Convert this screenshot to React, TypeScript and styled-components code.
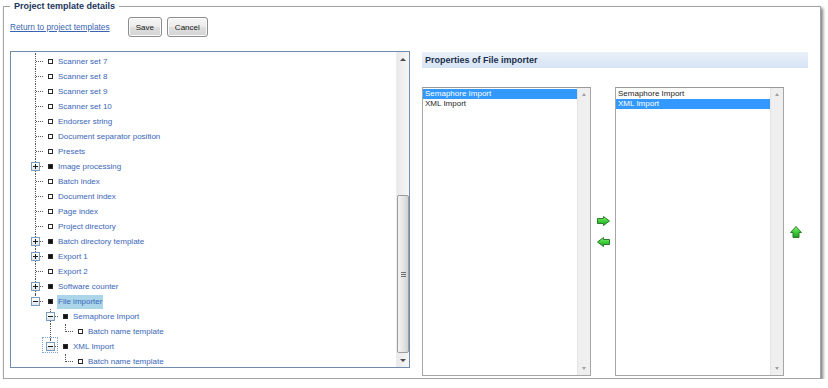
import React from "react";
import styled, { createGlobalStyle, css } from "styled-components";

const GlobalStyle = createGlobalStyle`
  html, body { margin: 0; padding: 0; background: #fff; }
  body {
    font-family: "Liberation Sans", Arial, sans-serif;
    font-size: 8px;
    color: #222;
  }
`;

interface TreeNode {
  label: string;
  children?: TreeNode[];
  collapsed?: boolean;
  selected?: boolean;
  focused?: boolean;
  offscreen?: boolean;
}

const tree: TreeNode[] = [
  // scrolled past, only its lines peek in at the top
  { label: "Scanner set 6", offscreen: true },
  { label: "Scanner set 7" },
  { label: "Scanner set 8" },
  { label: "Scanner set 9" },
  { label: "Scanner set 10" },
  { label: "Endorser string" },
  { label: "Document separator position" },
  { label: "Presets" },
  { label: "Image processing", collapsed: true },
  { label: "Batch index" },
  { label: "Document index" },
  { label: "Page index" },
  { label: "Project directory" },
  { label: "Batch directory template", collapsed: true },
  { label: "Export 1", collapsed: true },
  { label: "Export 2" },
  { label: "Software counter", collapsed: true },
  {
    label: "File importer",
    selected: true,
    children: [
      { label: "Semaphore Import", children: [{ label: "Batch name template" }] },
      { label: "XML Import", focused: true, children: [{ label: "Batch name template" }] },
    ],
  },
];

interface FlatRow {
  node: TreeNode;
  guides: boolean[];
  isLast: boolean;
}

function flatten(nodes: TreeNode[], guides: boolean[], out: FlatRow[]): FlatRow[] {
  nodes.forEach((node, i) => {
    const isLast = i === nodes.length - 1;
    out.push({ node, guides, isLast });
    if (node.children) flatten(node.children, [...guides, !isLast], out);
  });
  return out;
}

const rows = flatten(tree, [], []);

export default function App() {
  return (
    <Page>
      <GlobalStyle />
      <Frame>
        <Legend>Project template details</Legend>
        <Toolbar>
          <BackLink href="#">Return to project templates</BackLink>
          <Button>Save</Button>
          <Button>Cancel</Button>
        </Toolbar>
        <Content>
          <TreePanel>
            <TreeBody>
              <TreeList>
                {rows.map((row, i) => {
                  const hasKids = !!row.node.children || !!row.node.collapsed;
                  if (row.node.offscreen) {
                    return (
                      <Row key={i}>
                        <Connector $last={false} />
                      </Row>
                    );
                  }
                  return (
                    <Row key={i}>
                      {row.guides.map((g, j) => (
                        <Guide key={j} $line={g} />
                      ))}
                      <Connector $last={row.isLast}>
                        {hasKids && <Expander $open={!!row.node.children} />}
                        {row.node.focused && <FocusRing />}
                      </Connector>
                      <IconCell>
                        <NodeSquare $filled={hasKids} />
                      </IconCell>
                      <Label $selected={!!row.node.selected}>{row.node.label}</Label>
                    </Row>
                  );
                })}
              </TreeList>
            </TreeBody>
            <TreeScroll>
              <ScrollButton>
                <ArrowUp />
              </ScrollButton>
              <ScrollTrack>
                <Thumb $top={128} $height={158}>
                  <Grip />
                </Thumb>
              </ScrollTrack>
              <ScrollButton>
                <ArrowDown />
              </ScrollButton>
            </TreeScroll>
          </TreePanel>

          <Properties>
            <PropHeader>Properties of File importer</PropHeader>
            <ListArea>
              <ListBox>
                <Items>
                  <Item $selected>Semaphore Import</Item>
                  <Item>XML Import</Item>
                </Items>
                <ListScroll>
                  <ListArrowUp />
                  <ListArrowDown />
                </ListScroll>
              </ListBox>
              <MoveColumn>
                <ArrowIcon dir="right" />
                <ArrowIcon dir="left" />
              </MoveColumn>
              <ListBox>
                <Items>
                  <Item>Semaphore Import</Item>
                  <Item $selected>XML Import</Item>
                </Items>
                <ListScroll>
                  <ListArrowUp />
                  <ListArrowDown />
                </ListScroll>
              </ListBox>
              <MoveColumn>
                <ArrowIcon dir="up" />
              </MoveColumn>
            </ListArea>
          </Properties>
        </Content>
      </Frame>
    </Page>
  );
}

function ArrowIcon({ dir }: { dir: "left" | "right" | "up" }) {
  const id = `g-${dir}`;
  const shape =
    dir === "right"
      ? "M0.5 2.5 H6.5 V0.5 L12.5 5 L6.5 9.5 V7.5 H0.5 Z"
      : dir === "left"
      ? "M12.5 2.5 H6.5 V0.5 L0.5 5 L6.5 9.5 V7.5 H12.5 Z"
      : "M3 11.5 V6.5 H0.5 L6 0.5 L11.5 6.5 H9 V11.5 Z";
  const w = dir === "up" ? 12 : 13;
  const h = dir === "up" ? 12 : 10;
  return (
    <svg width={w} height={h} viewBox={`0 0 ${w} ${h}`}>
      <defs>
        <linearGradient id={id} x1="0" y1="0" x2="0" y2="1">
          <stop offset="0" stopColor="#8ef07a" />
          <stop offset="0.5" stopColor="#3fcf3a" />
          <stop offset="1" stopColor="#1f9a22" />
        </linearGradient>
      </defs>
      <path d={shape} fill={`url(#${id})`} stroke="#2b7d2b" strokeWidth="1" strokeLinejoin="round" />
    </svg>
  );
}

const Page = styled.div`
  padding: 0 7px 0 3px;
  width: 828px;
  box-sizing: border-box;
`;

const Frame = styled.fieldset`
  margin: 0;
  width: 818px;
  min-width: 0;
  box-sizing: border-box;
  border: 1px solid #a3a3a3;
  padding: 5px 6px 2px 6px;
  box-shadow: 2px 2px 3px rgba(0, 0, 0, 0.5);
`;

const Legend = styled.legend`
  padding: 0 4px;
  font-size: 9px;
  line-height: 12px;
  font-weight: bold;
  color: #1b365d;
`;

const Toolbar = styled.div`
  display: flex;
  align-items: center;
  height: 20px;
`;

const BackLink = styled.a`
  color: #3a64b0;
  font-size: 8.3px;
  text-decoration: underline;
  margin-right: 18px;
`;

const Button = styled.button`
  height: 20px;
  padding: 0 7px;
  margin-right: 5px;
  font-family: "Liberation Sans", Arial, sans-serif;
  font-size: 8px;
  color: #1a1a1a;
  border: 1px solid #8c8c8c;
  border-radius: 3px;
  background: linear-gradient(#f6f6f6, #ececec 48%, #dfdfdf 52%, #d4d4d4);
  box-shadow: inset 0 0 0 1px #fbfbfb;
`;

const Content = styled.div`
  display: flex;
  align-items: flex-start;
  margin-top: 14px;
`;

const TreePanel = styled.div`
  display: flex;
  width: 400px;
  height: 317px;
  box-sizing: border-box;
  border: 1px solid #6f8cad;
`;

const TreeBody = styled.div`
  flex: 1;
  overflow: hidden;
`;

const TreeList = styled.div`
  margin-top: -13px;
  padding-left: 17px;
`;

const Row = styled.div`
  display: flex;
  align-items: center;
  height: 15px;
`;

const dotted = "1px dotted #555";

const Guide = styled.span<{ $line: boolean }>`
  position: relative;
  flex: none;
  width: 15px;
  height: 15px;
  ${(p) =>
    p.$line &&
    css`
      &::before {
        content: "";
        position: absolute;
        left: 7px;
        top: 0;
        bottom: 0;
        border-left: ${dotted};
      }
    `}
`;

const Connector = styled.span<{ $last: boolean }>`
  position: relative;
  flex: none;
  width: 15px;
  height: 15px;
  &::before {
    content: "";
    position: absolute;
    left: 7px;
    top: 0;
    height: ${(p) => (p.$last ? "8px" : "15px")};
    border-left: ${dotted};
  }
  &::after {
    content: "";
    position: absolute;
    left: 8px;
    right: 0;
    top: 7px;
    border-top: ${dotted};
  }
`;

const Expander = styled.span<{ $open: boolean }>`
  position: absolute;
  z-index: 1;
  left: 3px;
  top: 3px;
  width: 9px;
  height: 9px;
  box-sizing: border-box;
  border: 1px solid #7c9cbc;
  background: linear-gradient(#ffffff, #dfe5ec);
  &::before {
    content: "";
    position: absolute;
    left: 1px;
    right: 1px;
    top: 3px;
    height: 1px;
    background: #1a1a1a;
  }
  ${(p) =>
    !p.$open &&
    css`
      &::after {
        content: "";
        position: absolute;
        top: 1px;
        bottom: 1px;
        left: 3px;
        width: 1px;
        background: #1a1a1a;
      }
    `}
`;

const FocusRing = styled.span`
  position: absolute;
  left: -1px;
  top: -2px;
  width: 16px;
  height: 16px;
  box-sizing: border-box;
  border: 1px dotted #7fa6d6;
`;

const IconCell = styled.span`
  flex: none;
  display: flex;
  align-items: center;
  width: 14px;
  height: 15px;
`;

const NodeSquare = styled.span<{ $filled: boolean }>`
  margin-left: 5px;
  width: 5px;
  height: 5px;
  box-sizing: border-box;
  border: 1px solid #2a2a2a;
  background: ${(p) => (p.$filled ? "#111" : "#fff")};
`;

const Label = styled.span<{ $selected: boolean }>`
  padding: 0 1px;
  height: 14px;
  line-height: 14px;
  font-size: 8px;
  color: #3a66b8;
  white-space: nowrap;
  background: ${(p) => (p.$selected ? "#abd6ea" : "transparent")};
`;

const TreeScroll = styled.div`
  flex: none;
  display: flex;
  flex-direction: column;
  width: 12px;
  background: linear-gradient(to right, #e9e9e9, #f6f6f6);
  border-left: 1px solid #ededed;
`;

const ScrollButton = styled.div`
  flex: none;
  height: 15px;
  display: flex;
  align-items: center;
  justify-content: center;
`;

const ArrowUp = styled.span`
  width: 0;
  height: 0;
  border-left: 3px solid transparent;
  border-right: 3px solid transparent;
  border-bottom: 3px solid #4a4a4a;
`;

const ArrowDown = styled(ArrowUp)`
  border-bottom: 0;
  border-top: 3px solid #4a4a4a;
`;

const ScrollTrack = styled.div`
  flex: 1;
`;

const Thumb = styled.div<{ $top: number; $height: number }>`
  margin-top: ${(p) => p.$top}px;
  height: ${(p) => p.$height}px;
  box-sizing: border-box;
  border: 1px solid #9d9d9d;
  border-radius: 2px;
  background: linear-gradient(to right, #f4f4f4, #e2e2e2 60%, #d2d2d2);
  display: flex;
  align-items: center;
  justify-content: center;
`;

const Grip = styled.span`
  width: 5px;
  height: 5px;
  background: repeating-linear-gradient(#6e6e6e 0 1px, transparent 1px 2px);
`;

const Properties = styled.div`
  display: flex;
  flex-direction: column;
  width: 386px;
  margin-left: 12px;
  margin-top: 1px;
`;

const PropHeader = styled.div`
  height: 16px;
  line-height: 17px;
  padding-left: 3px;
  font-size: 9px;
  font-weight: bold;
  color: #1b2f4d;
  background: linear-gradient(#e9f0f9, #d6e3f3);
`;

const ListArea = styled.div`
  display: flex;
  margin-top: 19px;
  height: 289px;
`;

const ListBox = styled.div`
  display: flex;
  width: 169px;
  box-sizing: border-box;
  border: 1px solid #a6a6a6;
  border-top-color: #9a9a9a;
  background: #fff;
`;

const Items = styled.div`
  flex: 1;
  padding-top: 1px;
`;

const Item = styled.div<{ $selected?: boolean }>`
  height: 10px;
  line-height: 10px;
  padding-left: 2px;
  font-size: 8px;
  color: ${(p) => (p.$selected ? "#fff" : "#1e1e1e")};
  background: ${(p) => (p.$selected ? "#3399ff" : "transparent")};
`;

const ListScroll = styled.div`
  flex: none;
  width: 12px;
  background: #efefef;
  border-left: 1px solid #e4e4e4;
  display: flex;
  flex-direction: column;
  justify-content: space-between;
  align-items: center;
  padding: 5px 0;
`;

const ListArrowUp = styled.span`
  width: 0;
  height: 0;
  border-left: 2.5px solid transparent;
  border-right: 2.5px solid transparent;
  border-bottom: 3px solid #a0a0a0;
`;

const ListArrowDown = styled(ListArrowUp)`
  border-bottom: 0;
  border-top: 3px solid #a0a0a0;
`;

const MoveColumn = styled.div`
  flex: none;
  width: 24px;
  display: flex;
  flex-direction: column;
  align-items: center;
  justify-content: center;
  gap: 11px;
`;
